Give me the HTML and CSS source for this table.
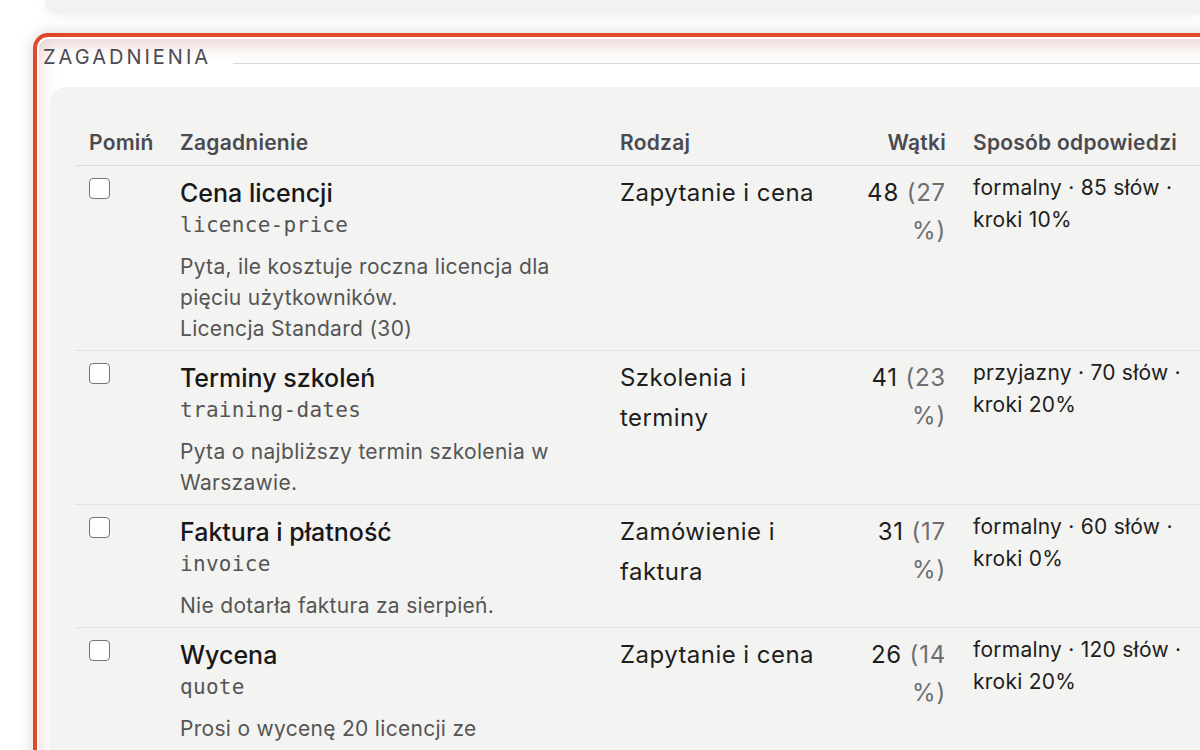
FILE: index.html
```html
<!DOCTYPE html>
<html lang="pl">
<head>
    <meta charset="UTF-8">
    <meta name="viewport" content="width=device-width, initial-scale=1.0">
    <title>Zagadnienia</title>
    <link rel="stylesheet" href="styles.css">
</head>
<body>
    <div class="prev-card"></div>

    <section class="topics">
        <div class="topics-head">
            <span class="topics-title">Zagadnienia</span>
        </div>

        <div class="topics-panel">
            <table class="topics-table">
                <colgroup>
                    <col class="c-skip">
                    <col class="c-topic">
                    <col class="c-kind">
                    <col class="c-threads">
                    <col class="c-style">
                </colgroup>
                <thead>
                    <tr>
                        <th>Pomiń</th>
                        <th>Zagadnienie</th>
                        <th>Rodzaj</th>
                        <th class="num">Wątki</th>
                        <th>Sposób odpowiedzi</th>
                    </tr>
                </thead>
                <tbody>
                    <tr>
                        <td class="skip"><input type="checkbox"></td>
                        <td>
                            <div class="topic-name">Cena licencji</div>
                            <div class="topic-key">licence-price</div>
                            <div class="topic-desc">Pyta, ile kosztuje roczna licencja dla pięciu użytkowników.<br>Licencja Standard (30)</div>
                        </td>
                        <td class="kind">Zapytanie i cena</td>
                        <td class="threads">48 <span class="pct">(27 %)</span></td>
                        <td class="style">formalny · 85 słów · kroki 10%</td>
                    </tr>
                    <tr>
                        <td class="skip"><input type="checkbox"></td>
                        <td>
                            <div class="topic-name">Terminy szkoleń</div>
                            <div class="topic-key">training-dates</div>
                            <div class="topic-desc">Pyta o najbliższy termin szkolenia w Warszawie.</div>
                        </td>
                        <td class="kind">Szkolenia i terminy</td>
                        <td class="threads">41 <span class="pct">(23 %)</span></td>
                        <td class="style">przyjazny · 70 słów · kroki 20%</td>
                    </tr>
                    <tr>
                        <td class="skip"><input type="checkbox"></td>
                        <td>
                            <div class="topic-name">Faktura i płatność</div>
                            <div class="topic-key">invoice</div>
                            <div class="topic-desc">Nie dotarła faktura za sierpień.</div>
                        </td>
                        <td class="kind">Zamówienie i faktura</td>
                        <td class="threads">31 <span class="pct">(17 %)</span></td>
                        <td class="style">formalny · 60 słów · kroki 0%</td>
                    </tr>
                    <tr>
                        <td class="skip"><input type="checkbox"></td>
                        <td>
                            <div class="topic-name">Wycena</div>
                            <div class="topic-key">quote</div>
                            <div class="topic-desc">Prosi o wycenę 20 licencji ze wsparciem technicznym.</div>
                        </td>
                        <td class="kind">Zapytanie i cena</td>
                        <td class="threads">26 <span class="pct">(14 %)</span></td>
                        <td class="style">formalny · 120 słów · kroki 20%</td>
                    </tr>
                </tbody>
            </table>
        </div>
    </section>
</body>
</html>
```

FILE: styles.css
```css
html, body {
    margin: 0;
    height: 750px;
    overflow: hidden;
}
body {
    font-family: Inter, 'Noto Sans', sans-serif;
    color: #222;
    background-color: #fff;
}
.prev-card {
    height: 14px;
    margin-left: 45px;
    background-color: #f2f2f0;
    border-bottom-left-radius: 14px;
    box-shadow: 0 0 12px rgba(0,0,0,0.09);
}
.topics {
    width: 1300px;
    min-height: 900px;
    margin: 19px 0 0 33px;
    border: 4px solid #e0482a;
    border-radius: 15px;
    background-color: #fff;
    box-shadow: inset 0 0 0 2px #fff, inset 0 6px 20px rgba(170,80,70,0.3), 0 0 16px rgba(0,0,0,0.16);
}
.topics-head {
    display: flex;
    gap: 22px;
    padding: 8px 0 0 6px;
}
.topics-head::after {
    content: '';
    flex: 1;
    height: 1px;
    margin-top: 18px;
    background-color: #d9d9d7;
}
.topics-title {
    font-size: 20px;
    line-height: 24px;
    letter-spacing: 3px;
    text-transform: uppercase;
    color: #4b4b52;
}
.topics-panel {
    margin: 18px 0 0 13px;
    padding: 30px 0 0 25px;
    min-height: 800px;
    background-color: #f3f3f1;
    border-top-left-radius: 16px;
}
.topics-table {
    width: 1125px;
    table-layout: fixed;
    border-collapse: collapse;
}
.c-skip { width: 91px; }
.c-topic { width: 440px; }
.c-kind { width: 234px; }
.c-threads { width: 120px; }
.c-style { width: 240px; }
.topics-table th {
    padding: 12px 14px 8px;
    font-size: 21px;
    line-height: 28px;
    font-weight: 600;
    letter-spacing: 0.25px;
    color: #4a4a50;
    text-align: left;
    border-bottom: 1px solid #dededc;
}
.topics-table th.num {
    text-align: right;
}
.topics-table td {
    padding: 11px 14px 6px;
    vertical-align: top;
    border-bottom: 1px solid #e3e3e1;
}
.topics-table th:last-child,
.topics-table td:last-child {
    padding-left: 13px;
}
.skip input {
    appearance: none;
    width: 21px;
    height: 21px;
    margin: 1px 0 0;
    border: 1.5px solid #767676;
    border-radius: 4px;
    background-color: #fff;
}
.topic-name {
    font-size: 25px;
    line-height: 32px;
    font-weight: 500;
    color: #18181a;
}
.topic-key {
    font-family: 'DejaVu Sans Mono', monospace;
    font-size: 21px;
    line-height: 32px;
    letter-spacing: 0.3px;
    color: #555;
}
.topic-desc {
    margin-top: 10px;
    font-size: 21px;
    line-height: 31px;
    letter-spacing: 0.3px;
    color: #555;
}
.topics-table td.kind {
    padding-top: 7px;
    font-size: 24px;
    line-height: 40px;
    letter-spacing: 0.45px;
    color: #1e1e20;
}
.topics-table td.threads {
    padding-top: 8px;
    font-size: 24px;
    line-height: 38px;
    letter-spacing: 0.8px;
    text-align: right;
    color: #1e1e20;
}
.pct {
    color: #6e6e72;
}
.topics-table td.style {
    padding-top: 6px;
    font-size: 21px;
    line-height: 32px;
    letter-spacing: 0.25px;
    color: #1e1e20;
}
```
